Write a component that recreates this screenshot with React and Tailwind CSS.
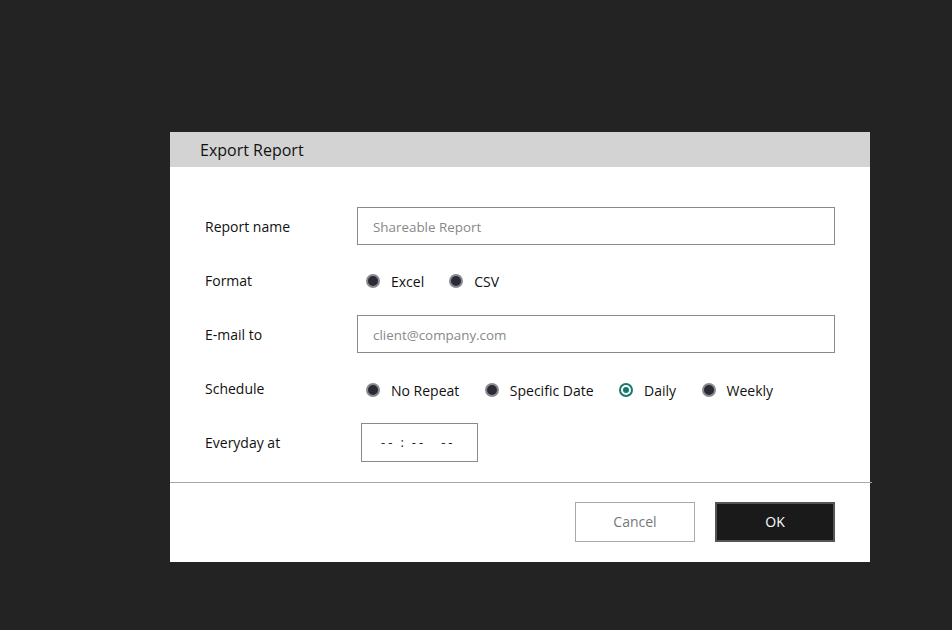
import React from "react";

function Radio({ label, checked }) {
  return (
    <label className="flex items-center gap-[11px]">
      {checked ? (
        <span className="w-[14px] h-[14px] rounded-full border-[2px] border-[#16796b] bg-white flex items-center justify-center">
          <span className="w-[6px] h-[6px] rounded-full bg-[#16796b]" />
        </span>
      ) : (
        <span className="w-[14px] h-[14px] rounded-full border-[2px] border-[#8a8a92] bg-[#2b2b35]" />
      )}
      <span className="text-[14px] text-[#111]">{label}</span>
    </label>
  );
}

export default function App() {
  return (
    <div
      className="w-[952px] h-[630px] bg-[#232323] pt-[132px] pl-[170px]"
      style={{ fontFamily: '"Open Sans", "Noto Sans", sans-serif' }}
    >
      <div className="w-[700px] h-[430px] bg-white flex flex-col">
        <div className="h-[35px] bg-[#d3d3d3] flex items-center pl-[30px] text-[16px] text-[#111]">
          Export Report
        </div>
        <div className="flex flex-col pt-[40px] px-[35px] pb-[20px]">
          <div className="flex h-[38px] items-center">
            <div className="w-[152px] text-[14px] text-[#111]">Report name</div>
            <div className="flex-1 h-[38px] border border-[#8a8a8a] flex items-center px-[15px] pt-[3px] text-[13.4px] text-[#888]">
              Shareable Report
            </div>
          </div>
          <div className="flex h-[70px] items-center pt-[2px]">
            <div className="w-[152px] text-[14px] text-[#111] -mt-[2px]">Format</div>
            <div className="flex items-center gap-[25px] pl-[9px]">
              <Radio label="Excel" />
              <Radio label="CSV" />
            </div>
          </div>
          <div className="flex h-[38px] items-center">
            <div className="w-[152px] text-[14px] text-[#111]">E-mail to</div>
            <div className="flex-1 h-[38px] border border-[#8a8a8a] flex items-center px-[15px] pt-[3px] text-[13.4px] text-[#888]">
              client@company.com
            </div>
          </div>
          <div className="flex h-[70px] items-center pt-[4px]">
            <div className="w-[152px] text-[14px] text-[#111] -mt-[4px]">Schedule</div>
            <div className="flex items-center gap-[25.5px] pl-[9px]">
              <Radio label="No Repeat" />
              <Radio label="Specific Date" />
              <Radio label="Daily" checked />
              <Radio label="Weekly" />
            </div>
          </div>
          <div className="flex h-[39px] items-center">
            <div className="w-[156px] text-[14px] text-[#111]">Everyday at</div>
            <div className="w-[117px] h-[39px] border border-[#8a8a8a] flex items-center pl-[19px] pt-[1px] text-[13px] text-[#222]">
              <span className="tracking-[3px]">--</span>
              <span className="ml-[5px]">:</span>
              <span className="ml-[8px] tracking-[3px]">--</span>
              <span className="ml-[15px] tracking-[3px]">--</span>
            </div>
          </div>
        </div>
        <div className="w-[702px] border-t border-[#a8a8a8]" />
        <div className="flex justify-end gap-[20px] pt-[19px] pr-[35px]">
          <button className="w-[120px] h-[40px] border border-[#aaa] bg-white text-[14px] text-[#777] pb-[2px]">
            Cancel
          </button>
          <button className="w-[120px] h-[40px] border-[2px] border-[#555] bg-[#1a1a1a] text-[14px] text-white pb-[2px]">
            OK
          </button>
        </div>
      </div>
    </div>
  );
}
